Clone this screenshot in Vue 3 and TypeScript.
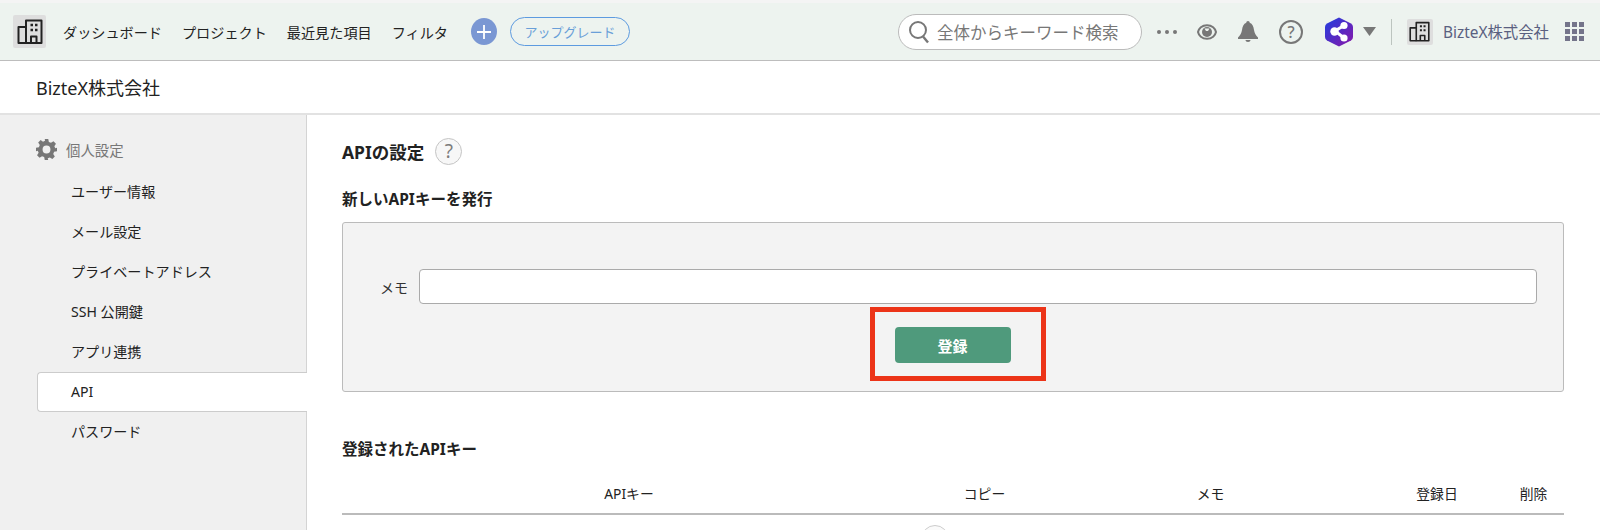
<script setup lang="ts">
const navItems: string[] = ['ダッシュボード', 'プロジェクト', '最近見た項目', 'フィルタ']
const sideItems: string[] = ['ユーザー情報', 'メール設定', 'プライベートアドレス', 'SSH 公開鍵', 'アプリ連携', 'API', 'パスワード']
const columns: string[] = ['APIキー', 'コピー', 'メモ', '登録日', '削除']
const gridDots: number[] = [0, 1, 2, 3, 4, 5, 6, 7, 8]
</script>

<template>
  <div class="page">
    <header class="topbar">
      <div class="tile tile-large">
        <svg width="26" height="25" viewBox="0 0 26 25" fill="none" stroke="#222" stroke-width="2" stroke-linejoin="round">
          <path d="M9 1.500h15.500v22.500H9z" />
          <path d="M9 8H1.500v16H9" />
          <path d="M14 24v-6.500h5.500V24" />
          <path d="M13.500 6h2.500M18 6h2.500M13.500 11h2.500M18 11h2.500" stroke-width="2.500" />
        </svg>
      </div>
      <nav class="nav">
        <span v-for="item in navItems" :key="item">{{ item }}</span>
      </nav>
      <div class="plus">
        <svg width="16" height="16" viewBox="0 0 16 16" stroke="#fff" stroke-width="1.800"><path d="M8 1v14M1 8h14" /></svg>
      </div>
      <div class="upgrade">アップグレード</div>

      <div class="search">
        <svg width="22" height="24" viewBox="0 0 22 24" fill="none" stroke="#777" stroke-width="2">
          <circle cx="10" cy="10" r="8" />
          <path d="M15 16.500l5 6" stroke-width="2.400" />
        </svg>
        <span>全体からキーワード検索</span>
      </div>
      <div class="dots"><i></i><i></i><i></i></div>
      <svg class="eye" width="20" height="16" viewBox="0 0 20 16">
        <path d="M10 1.200C15 1.200 18.300 4.500 19 8c-.7 3.500-4 6.800-9 6.800S1.700 11.500 1 8c.7-3.500 4-6.800 9-6.800z" fill="none" stroke="#777" stroke-width="2" />
        <circle cx="10" cy="8" r="5" fill="#777" />
        <path d="M7.500 4.500h5L11 7H9z" fill="#edf3ef" />
      </svg>
      <svg class="bell" width="20" height="21" viewBox="0 0 20 21" fill="#777">
        <path d="M10 0c1 0 1.700.7 1.700 1.800C14.500 2.800 15.500 5.500 16 9c.5 3.500 2 5.500 4 7.500V18H0v-1.500C2 14.500 3.500 12.500 4 9c.5-3.500 1.500-6.200 4.300-7.200C8.300.7 9 0 10 0z" />
        <path d="M7.500 19h5c0 1.200-1.100 2-2.500 2s-2.500-.8-2.500-2z" />
      </svg>
      <div class="help-top">?</div>
      <svg class="hex" width="30" height="32" viewBox="0 0 30 32">
        <defs>
          <linearGradient id="hexGrad" x1="0" y1="0" x2="1" y2="1">
            <stop offset="0" stop-color="#1f3fe0" />
            <stop offset="1" stop-color="#8a16a8" />
          </linearGradient>
        </defs>
        <path d="M15 1.500 27 7.500q2 1 2 3.500v10q0 2.500-2 3.500L15 30.500 3 24.500q-2-1-2-3.500V11q0-2.500 2-3.500z" fill="url(#hexGrad)" />
        <path d="M20 9.500 11 15l9 7" fill="none" stroke="#fff" stroke-width="3" />
        <circle cx="20" cy="9.500" r="3.600" fill="#fff" />
        <circle cx="10.500" cy="15.500" r="4.200" fill="#fff" />
        <circle cx="20" cy="22" r="3.600" fill="#fff" />
      </svg>
      <svg class="caret" width="13" height="9" viewBox="0 0 13 9" fill="#777"><path d="M0 0h13L6.500 9z" /></svg>
      <div class="divider"></div>
      <div class="tile tile-small">
        <svg width="21" height="21" viewBox="0 0 26 25" fill="none" stroke="#222" stroke-width="2" stroke-linejoin="round">
          <path d="M9 1.500h15.500v22.500H9z" />
          <path d="M9 8H1.500v16H9" />
          <path d="M14 24v-6.500h5.500V24" />
          <path d="M13.500 6h2.500M18 6h2.500M13.500 11h2.500M18 11h2.500" stroke-width="2.500" />
        </svg>
      </div>
      <span class="company-top">BizteX株式会社</span>
      <div class="grid-icon">
        <i v-for="dot in gridDots" :key="dot"></i>
      </div>
    </header>

    <div class="subheader">BizteX株式会社</div>

    <div class="body">
      <aside class="sidebar">
        <div class="side-head">
          <svg width="21" height="21" viewBox="0 0 24 24" fill="#777">
            <path d="M10 0h4l.7 3.300 2.400 1 2.900-1.800 2.800 2.800-1.800 2.900 1 2.400L24 10v4l-3.300.7-1 2.400 1.800 2.900-2.800 2.800-2.900-1.800-2.400 1L14 24h-4l-.7-3.300-2.400-1L4 21.500l-2.800-2.800L3 15.800l-1-2.400L0 14v-4l3.300-.7 1-2.400L2.500 4l2.800-2.800L8 3l2.300-1zM12 7.500a4.500 4.500 0 1 0 0 9 4.500 4.500 0 0 0 0-9z" fill-rule="evenodd" />
          </svg>
          <span>個人設定</span>
        </div>
        <ul class="side-list">
          <li v-for="item in sideItems" :key="item" :class="{ active: item === 'API' }">{{ item }}</li>
        </ul>
      </aside>

      <main class="content">
        <div class="title-row">
          <h1>APIの設定</h1>
          <div class="help">?</div>
        </div>
        <h2 class="section-new">新しいAPIキーを発行</h2>
        <section class="panel">
          <div class="memo-row">
            <label>メモ</label>
            <div class="memo-input"></div>
          </div>
          <div class="submit-wrap">
            <button class="submit" type="button">登録</button>
            <div class="highlight"></div>
          </div>
        </section>
        <h2 class="section-list">登録されたAPIキー</h2>
        <div class="table-head">
          <span v-for="col in columns" :key="col">{{ col }}</span>
        </div>
        <div class="table-body"><div class="spinner"></div></div>
      </main>
    </div>
  </div>
</template>

<style>
html, body { margin: 0; height: 530px; overflow: hidden; background: #fff; }
</style>

<style scoped>
.page {
  width: 1600px;
  height: 530px;
  overflow: hidden;
  font-family: "Noto Sans", "Noto Sans CJK JP", sans-serif;
  color: #222;
  padding-top: 3px;
  box-sizing: border-box;
  background-color: #f4f4f4;
}
.topbar {
  height: 58px;
  box-sizing: border-box;
  border-bottom: 1px solid #bdbdbd;
  background: #edf3ef;
  display: flex;
  align-items: center;
  padding-left: 13px;
  font-size: 14.150px;
}
.tile {
  display: flex;
  align-items: center;
  justify-content: center;
  background: #dedede;
  border-radius: 2px;
}
.tile-large { width: 33px; height: 33px; }
.tile-small { width: 26px; height: 26px; margin-left: 15px; }
.nav { display: flex; gap: 20px; margin-left: 17px; }
.plus {
  width: 26px;
  height: 27px;
  border-radius: 50%;
  background: #7a97d3;
  display: flex;
  align-items: center;
  justify-content: center;
  margin-left: 23px;
}
.upgrade {
  width: 120px;
  height: 29px;
  box-sizing: border-box;
  border: 1px solid #5d9be0;
  border-radius: 15px;
  color: #6a9fd8;
  font-size: 13px;
  display: flex;
  align-items: center;
  justify-content: center;
  margin-left: 13px;
}
.search {
  width: 244px;
  height: 36px;
  box-sizing: border-box;
  border: 1px solid #bbb;
  border-radius: 18px;
  background: #fff;
  display: flex;
  align-items: center;
  gap: 7px;
  padding-left: 9px;
  margin-left: 268px;
  color: #777;
  font-size: 16.500px;
  white-space: nowrap;
}
.dots { display: flex; gap: 4px; margin-left: 15px; }
.dots i { width: 4px; height: 4px; border-radius: 50%; background: #777; }
.eye { margin-left: 20px; }
.bell { margin-left: 21px; }
.help-top {
  width: 24px;
  height: 24px;
  box-sizing: border-box;
  border: 2px solid #777;
  border-radius: 50%;
  color: #777;
  font-size: 16px;
  font-weight: 500;
  line-height: 20px;
  text-align: center;
  margin-left: 21px;
}
.hex { margin-left: 21px; }
.caret { margin-left: 9px; }
.divider { width: 1px; height: 26px; background: #bcc4bf; margin-left: 15px; }
.company-top { color: #5a6080; font-size: 15.400px; margin-left: 10px; white-space: nowrap; }
.grid-icon {
  display: grid;
  grid-template-columns: repeat(3, 5px);
  grid-auto-rows: 5px;
  gap: 2px;
  margin-left: 16px;
}
.grid-icon i { background: #74748a; }
.subheader {
  height: 54px;
  box-sizing: border-box;
  background: #fff;
  display: flex;
  align-items: center;
  padding-left: 36px;
  font-size: 18px;
  border-bottom: 2px solid #e2e2e2;
}
.body { display: flex; height: 415px; background: #fff; }
.sidebar {
  width: 307px;
  flex: none;
  box-sizing: border-box;
  background: #f0f0f0;
  border-right: 1px solid #d4d4d4;
  padding: 24px 0 0 37px;
}
.side-head {
  display: flex;
  align-items: center;
  gap: 9px;
  height: 20px;
  margin-left: -1px;
  color: #777;
  font-size: 14.400px;
  margin-bottom: 13px;
}
.side-list { list-style: none; margin: 0 -1px 0 0; padding: 0; }
.side-list li {
  height: 40px;
  box-sizing: border-box;
  line-height: 38px;
  padding-left: 33px;
  font-size: 14.100px;
  border: 1px solid transparent;
  border-right: 0;
}
.side-list li.active {
  background: #fff;
  border-color: #ccc;
  border-radius: 4px 0 0 4px;
}
.content { flex: 1; padding: 0 36px 0 35px; min-width: 0; }
.title-row { display: flex; align-items: center; gap: 11px; height: 28px; margin-top: 22px; }
h1 { margin: 0; font-size: 17.500px; font-weight: 700; }
.help {
  width: 27px;
  height: 27px;
  box-sizing: border-box;
  border: 1px solid #c4c4c4;
  border-radius: 50%;
  background: #f7f7f7;
  color: #7c7c7c;
  font-size: 19px;
  line-height: 25px;
  text-align: center;
}
h2 { margin: 0; font-size: 15.500px; font-weight: 700; line-height: 20px; }
.section-new { margin-top: 24px; }
.panel {
  height: 170px;
  box-sizing: border-box;
  border: 1px solid #bbb;
  border-radius: 3px;
  background: #f3f3f3;
  margin-top: 13px;
  padding: 46px 26px 0 37px;
}
.memo-row { display: flex; align-items: center; gap: 11px; }
.memo-row label { font-size: 14px; color: #333; }
.memo-input {
  flex: 1;
  height: 35px;
  box-sizing: border-box;
  border: 1px solid #aaa;
  border-radius: 4px;
  background: #fff;
}
.submit-wrap { position: relative; width: 116px; margin: 23px auto 0; left: -6px; }
.submit {
  display: block;
  width: 116px;
  height: 36px;
  border: 0;
  border-radius: 4px;
  background: #4f9a7c;
  color: #fff;
  font: 700 15px "Noto Sans", "Noto Sans CJK JP", sans-serif;
}
.highlight {
  position: absolute;
  top: -20px;
  bottom: -18px;
  left: -25px;
  right: -35px;
  border: 5px solid #ec3418;
}
.section-list { margin-top: 47px; }
.table-head {
  display: grid;
  grid-template-columns: 574px 137px 315px 138px 55px;
  height: 56px;
  box-sizing: border-box;
  border-bottom: 2px solid #bbb;
  padding-top: 24px;
  font-size: 13.800px;
  text-align: center;
  color: #222;
}
.table-body { display: flex; padding: 10px 0 0 579px; }
.spinner {
  width: 28px;
  height: 28px;
  box-sizing: border-box;
  flex: none;
  border: 1px solid #ccc;
  border-radius: 50%;
  background: #fafafa;
}
</style>
